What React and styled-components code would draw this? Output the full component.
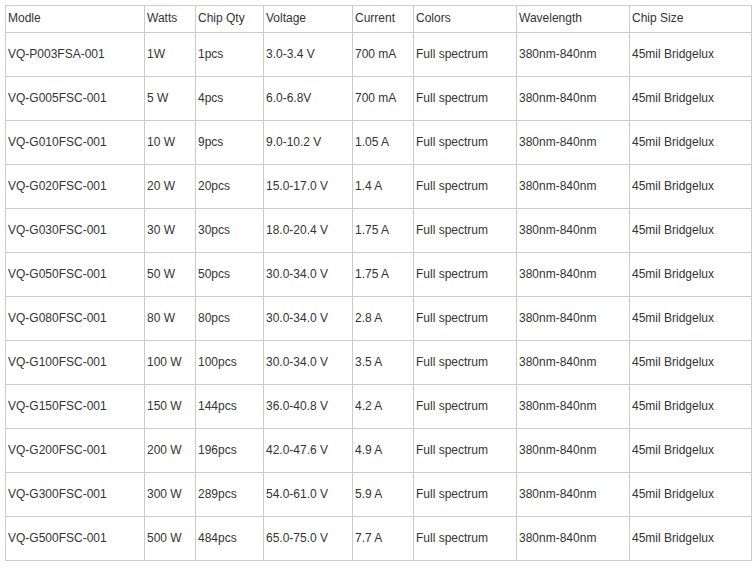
import styled, { createGlobalStyle } from 'styled-components';

const GlobalStyle = createGlobalStyle`
    body {
        margin: 0;
        background: #fff;
        font-family: Arial, "Liberation Sans", sans-serif;
    }
`;

const Page = styled.div`
    padding: 5px 0 0 5px;
`;

const SpecTable = styled.table`
    border-collapse: collapse;
    table-layout: fixed;
    width: 746px;
    font-size: 12px;
    color: #333;
`;

const Cell = styled.td`
    border: 1px solid #cbcbcb;
    padding: 0 2px 2px;
    height: ${(p) => (p.$head ? 24 : 41)}px;
    vertical-align: middle;
    white-space: nowrap;
    overflow: hidden;
    text-align: left;
    font-weight: normal;
`;

const columns = [
    { title: 'Modle', width: 139 },
    { title: 'Watts', width: 51 },
    { title: 'Chip Qty', width: 68 },
    { title: 'Voltage', width: 89 },
    { title: 'Current', width: 61 },
    { title: 'Colors', width: 103 },
    { title: 'Wavelength', width: 113 },
    { title: 'Chip Size', width: 122 },
];

const rows = [
    ['VQ-P003FSA-001', '1W', '1pcs', '3.0-3.4 V', '700 mA'],
    ['VQ-G005FSC-001', '5 W', '4pcs', '6.0-6.8V', '700 mA'],
    ['VQ-G010FSC-001', '10 W', '9pcs', '9.0-10.2 V', '1.05 A'],
    ['VQ-G020FSC-001', '20 W', '20pcs', '15.0-17.0 V', '1.4 A'],
    ['VQ-G030FSC-001', '30 W', '30pcs', '18.0-20.4 V', '1.75 A'],
    ['VQ-G050FSC-001', '50 W', '50pcs', '30.0-34.0 V', '1.75 A'],
    ['VQ-G080FSC-001', '80 W', '80pcs', '30.0-34.0 V', '2.8 A'],
    ['VQ-G100FSC-001', '100 W', '100pcs', '30.0-34.0 V', '3.5 A'],
    ['VQ-G150FSC-001', '150 W', '144pcs', '36.0-40.8 V', '4.2 A'],
    ['VQ-G200FSC-001', '200 W', '196pcs', '42.0-47.6 V', '4.9 A'],
    ['VQ-G300FSC-001', '300 W', '289pcs', '54.0-61.0 V', '5.9 A'],
    ['VQ-G500FSC-001', '500 W', '484pcs', '65.0-75.0 V', '7.7 A'],
];

// every model shares the same spectrum, wavelength and chip
const shared = ['Full spectrum', '380nm-840nm', '45mil Bridgelux'];

const App = () => (
    <>
        <GlobalStyle />
        <Page>
            <SpecTable>
                <colgroup>
                    {columns.map((c) => (
                        <col key={c.title} style={{ width: c.width }} />
                    ))}
                </colgroup>
                <thead>
                    <tr>
                        {columns.map((c) => (
                            <Cell as="th" $head key={c.title}>
                                {c.title}
                            </Cell>
                        ))}
                    </tr>
                </thead>
                <tbody>
                    {rows.map((r) => (
                        <tr key={r[0]}>
                            {[...r, ...shared].map((v, i) => (
                                <Cell key={i}>{v}</Cell>
                            ))}
                        </tr>
                    ))}
                </tbody>
            </SpecTable>
        </Page>
    </>
);

export default App;
